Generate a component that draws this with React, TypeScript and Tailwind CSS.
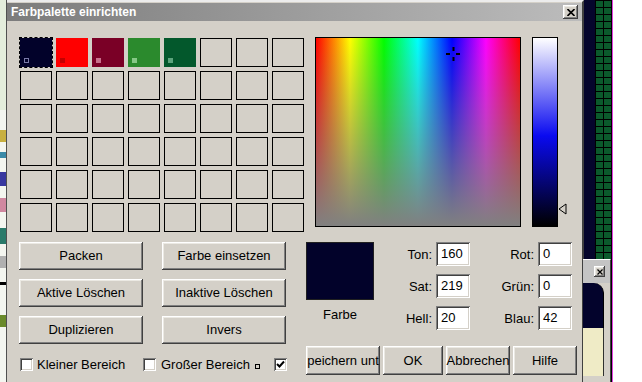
import React from "react";

const raised =
  "shadow-[inset_-1px_-1px_#404040,inset_1px_1px_#ffffff,inset_-2px_-2px_#808080,inset_2px_2px_#ebe9e3]";
const sunken =
  "shadow-[inset_1px_1px_#808080,inset_-1px_-1px_#ffffff,inset_2px_2px_#404040,inset_-2px_-2px_#d4d0c8]";

const swatches = [
  { cell: "bg-[#02022a] border-[#02022a] outline outline-1 outline-dashed outline-black", mark: "border border-[#7a7aa8]" },
  { cell: "bg-[#ff0000] border-[#ff0000]", mark: "bg-[#c40000]" },
  { cell: "bg-[#7a0026] border-[#7a0026]", mark: "bg-[#c8708c]" },
  { cell: "bg-[#2b8a2d] border-[#2b8a2d]", mark: "bg-[#86c886]" },
  { cell: "bg-[#03582c] border-[#03582c]", mark: "bg-[#5ca47c]" },
];

const Btn = ({ children, className = "" }: { children: React.ReactNode; className?: string }) => (
  <div
    className={`flex items-center justify-center overflow-hidden whitespace-nowrap bg-[#d4d0c8] text-[13px] text-black ${raised} ${className}`}
  >
    {children}
  </div>
);

const Check = ({ checked = false }: { checked?: boolean }) => (
  <span className={`flex h-[13px] w-[13px] shrink-0 items-center justify-center bg-white ${sunken}`}>
    {checked && (
      <svg width="9" height="9" viewBox="0 0 9 9">
        <path d="M1 4 L3.5 6.5 L8 1.5" stroke="#000" strokeWidth="2" fill="none" />
      </svg>
    )}
  </span>
);

const Field = ({ label, value }: { label: string; value: string }) => (
  <>
    <span className="self-center text-right text-[13px] leading-none">{label}</span>
    <div className={`flex h-[24px] items-center bg-white pl-[5px] text-[13px] ${sunken}`}>{value}</div>
  </>
);

export default function App() {
  return (
    <div className="relative flex h-[382px] w-[642px] overflow-hidden bg-white font-['Liberation_Sans',Arial,sans-serif] text-black">
      {/* bits of the window behind */}
      <div className="flex w-[7px] flex-col border-r border-r-[#505050] bg-[#f4f6f0]">
        <div className="h-[110px] bg-[#e4eedc]" />
        <div className="mt-[20px] h-[12px] bg-[#c8b040]" />
        <div className="mt-[10px] h-[6px] bg-[#3a8aa8]" />
        <div className="mt-[14px] h-[14px] bg-[#3838a0]" />
        <div className="mt-[12px] h-[14px] bg-[#d088a0]" />
        <div className="mt-[16px] h-[16px] bg-[#2a7a6a]" />
        <div className="mt-[12px] h-[12px] bg-[#b0b0b0]" />
        <div className="mt-[14px] h-[3px] bg-black" />
        <div className="mt-[30px] h-[12px] bg-[#6a8a2a]" />
      </div>

      {/* dialog */}
      <div className="flex h-[382px] w-[577px] flex-col border-r-2 border-t-2 border-r-[#404040] border-t-[#ececec] bg-[#d4d0c8] pt-[1px]">
        <div className="flex h-[18px] items-center justify-between bg-[linear-gradient(to_right,#7c7c7c,#bcbcbc)] pl-[4px] pr-[4px]">
          <span className="text-[12px] font-bold leading-none text-white">Farbpalette einrichten</span>
          <div className={`flex h-[14px] w-[15px] items-center justify-center bg-[#d4d0c8] ${raised}`}>
            <svg width="8" height="7" viewBox="0 0 8 7">
              <path d="M0.5 0 L7.5 7 M7.5 0 L0.5 7" stroke="#000" strokeWidth="1.6" />
            </svg>
          </div>
        </div>

        <div className="flex pl-[12px] pt-[16px]">
          {/* left side */}
          <div className="flex w-[287px] flex-col">
            <div className="ml-[1px] mt-[1px] grid grid-cols-[repeat(8,32px)] gap-[4px]">
              {Array.from({ length: 48 }).map((_, i) => {
                const s = swatches[i];
                return (
                  <div key={i} className={`relative h-[29px] w-[32px] border ${s ? s.cell : "border-black"}`}>
                    {s && <span className={`absolute bottom-[3px] left-[3px] h-[5px] w-[5px] ${s.mark}`} />}
                  </div>
                );
              })}
            </div>

            <div className="mt-[10px] grid grid-cols-[124px_124px] gap-x-[19px] gap-y-[9px]">
              <Btn className="h-[28px]">Packen</Btn>
              <Btn className="h-[28px]">Farbe einsetzen</Btn>
              <Btn className="h-[28px]">Aktive Löschen</Btn>
              <Btn className="h-[28px]">Inaktive Löschen</Btn>
              <Btn className="h-[28px]">Duplizieren</Btn>
              <Btn className="h-[28px]">Invers</Btn>
            </div>

            <div className="ml-[1px] mt-[14px] flex h-[13px] items-center text-[13px] leading-none">
              <div className="flex w-[123px] items-center gap-[4px]">
                <Check />
                <span>Kleiner Bereich</span>
              </div>
              <div className="flex w-[131px] items-center">
                <Check />
                <span className="ml-[5px]">Großer Bereich</span>
                <span className="ml-[5px] mt-[4px] h-[5px] w-[5px] border border-black" />
              </div>
              <Check checked />
            </div>
          </div>

          {/* right side */}
          <div className="flex flex-col">
            <div className="flex">
              <div className="relative ml-[9px] h-[190px] w-[206px] border border-black bg-[linear-gradient(to_bottom,rgba(128,128,128,0),#808080),linear-gradient(to_right,#ff0000,#ffff00,#00ff00,#00ffff,#0000ff,#ff00ff,#ff0000)]">
                <svg className="absolute left-[130px] top-[9px]" width="15" height="15" viewBox="0 0 15 15">
                  <rect x="6.5" y="0" width="2" height="4" fill="#000" />
                  <rect x="6.5" y="10" width="2" height="4" fill="#000" />
                  <rect x="0" y="6" width="4" height="2" fill="#000" />
                  <rect x="10" y="6" width="4" height="2" fill="#000" />
                </svg>
              </div>
              <div className="relative ml-[11px] h-[190px] w-[26px] border border-black bg-[linear-gradient(to_bottom,#ffffff,#0a0af0_52%,#000000)]">
                <svg className="absolute left-[25px] top-[165px]" width="9" height="12" viewBox="0 0 9 12">
                  <path d="M1 6 L8 1 L8 11 Z" fill="none" stroke="#000" strokeWidth="1" />
                </svg>
              </div>
            </div>

            <div className="mt-[15px] flex">
              <div className="flex w-[68px] flex-col items-center">
                <div className="h-[58px] w-[68px] border border-[#202020] bg-[#02022a]" />
                <span className="mt-[5px] text-[13px]">Farbe</span>
              </div>
              <div className="grid grid-cols-[58px_34px_60px_34px] gap-x-[4px] gap-y-[8px]">
                <Field label="Ton:" value="160" />
                <Field label="Rot:" value="0" />
                <Field label="Sat:" value="219" />
                <Field label="Grün:" value="0" />
                <Field label="Hell:" value="20" />
                <Field label="Blau:" value="42" />
              </div>
            </div>

            <div className="mt-[16px] flex gap-[3px]">
              <Btn className="h-[29px] w-[74px]">peichern unt</Btn>
              <Btn className="h-[29px] w-[60px]">OK</Btn>
              <Btn className="h-[29px] w-[64px]">Abbrechen</Btn>
              <Btn className="h-[29px] w-[64px]">Hilfe</Btn>
            </div>
          </div>
        </div>
      </div>

      {/* desktop behind on the right */}
      <div className="w-[11px] bg-[#05052c]" />
      <div className="w-[17px] bg-[#0b5a2c] bg-[linear-gradient(#000000_1px,transparent_1px),linear-gradient(90deg,#000000_1px,transparent_1px)] bg-[length:8px_7px]" />
      <div className="w-[1px] bg-[#e040e0]" />
      <div className="flex-1 bg-white" />

      {/* small window in front */}
      <div className="absolute left-[583px] top-[259px] flex h-[123px] w-[28px] flex-col border-r border-t border-r-[#404040] border-t-white bg-[#d4d0c8]">
        <div className="flex h-[23px] items-center justify-end bg-[#c4c4c4] pr-[5px]">
          <div className={`flex h-[11px] w-[11px] items-center justify-center bg-[#d4d0c8] ${raised}`}>
            <svg width="6" height="6" viewBox="0 0 6 6">
              <path d="M0.5 0.5 L5.5 5.5 M5.5 0.5 L0.5 5.5" stroke="#000" strokeWidth="1.2" />
            </svg>
          </div>
        </div>
        <div className="flex flex-1 flex-col pb-[6px] pr-[6px]">
          <div className="h-[45px] rounded-tr-[10px] border-r border-black bg-[#03032c]" />
          <div className="flex-1 border-r border-[#303030] bg-[#efebc6]" />
        </div>
      </div>
    </div>
  );
}
